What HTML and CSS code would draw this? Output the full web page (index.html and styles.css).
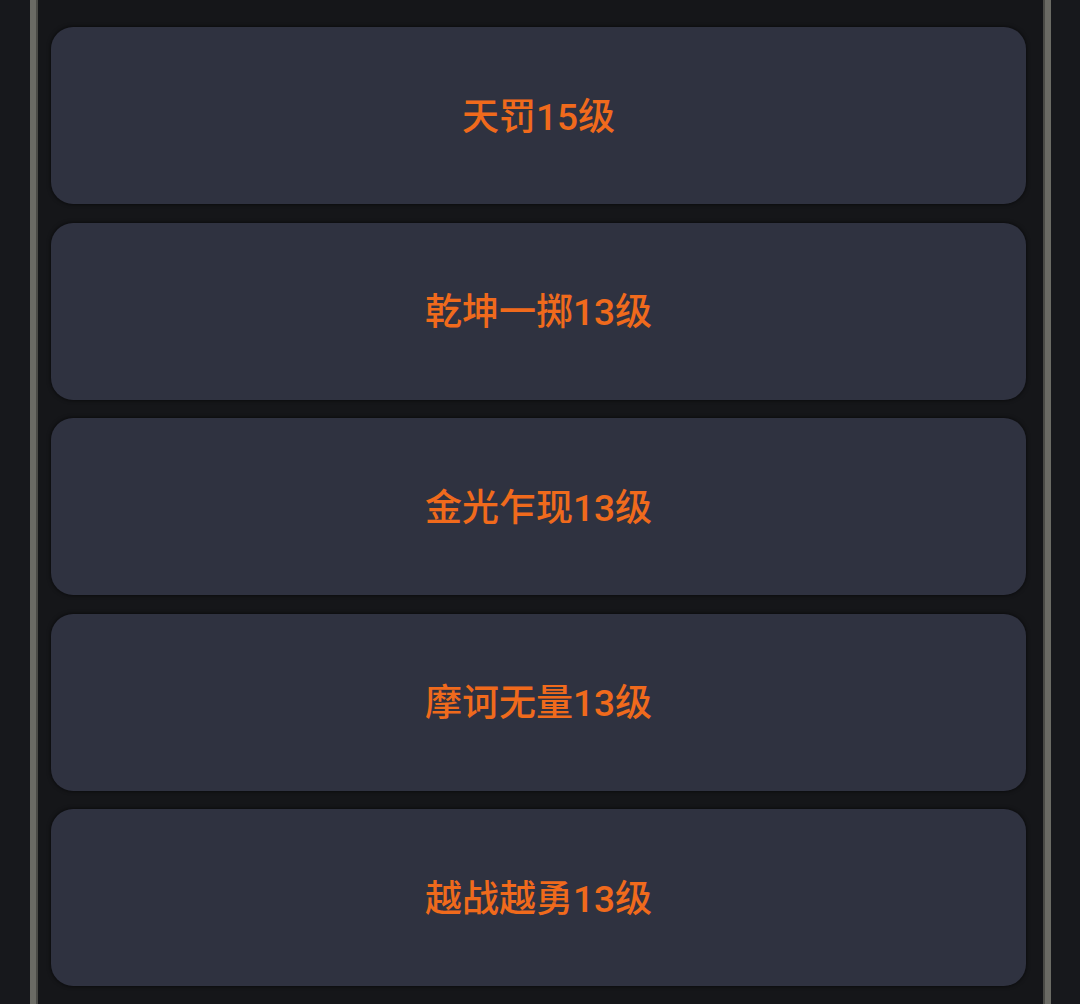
FILE: index.html
```html
<!DOCTYPE html>
<html lang="zh">
<head>
    <meta charset="UTF-8">
    <meta name="viewport" content="width=device-width, initial-scale=1.0">
    <title>技能列表</title>
    <link rel="stylesheet" href="styles.css">
</head>
<body>
    <div class="panel">
        <div class="skill">天罚15级</div>
        <div class="skill">乾坤一掷13级</div>
        <div class="skill">金光乍现13级</div>
        <div class="skill">摩诃无量13级</div>
        <div class="skill">越战越勇13级</div>
    </div>
</body>
</html>
```

FILE: styles.css
```css
html, body {
    height: 100%;
}
body {
    margin: 0;
    background: #17181c;
    font-family: Roboto, "Noto Sans CJK SC", sans-serif;
    overflow: hidden;
}
.panel {
    margin-left: 30px;
    width: 1021px;
    min-height: 100%;
    box-sizing: border-box;
    border-left: 6px solid #6a6a64;
    border-right: 6px solid #6a6a64;
    box-shadow: inset 2px 0 0 #4a4a46, inset -2px 0 0 #4a4a46;
    padding: 27px 19px 0 15px;
    display: flex;
    flex-direction: column;
    gap: 18.5px;
    background: #151619;
}
.skill {
    height: 177px;
    flex-shrink: 0;
    background: #2f3240;
    border-radius: 22px;
    box-shadow: 0 0 4px rgba(0, 0, 0, 0.7);
    display: flex;
    align-items: center;
    justify-content: center;
    padding-bottom: 4px;
    box-sizing: border-box;
    color: #f06a1c;
    font-size: 37px;
    font-weight: 500;
}
```
